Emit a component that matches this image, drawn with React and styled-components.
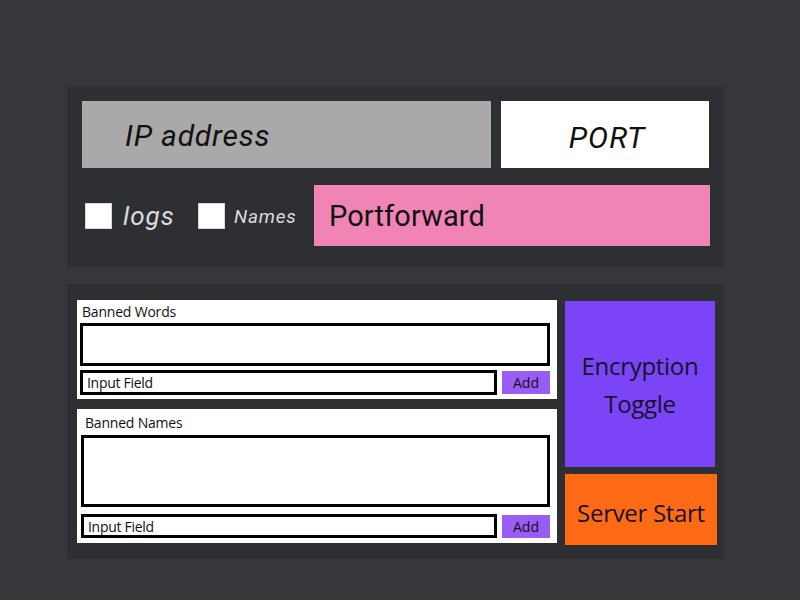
import React from "react";
import styled, { createGlobalStyle } from "styled-components";

const Global = createGlobalStyle`
  html, body { margin: 0; padding: 0; background: #36373b; }
  body { width: 800px; height: 600px; overflow: hidden; }
  * { box-sizing: border-box; }
`;

const Page = styled.div`
  width: 800px;
  height: 600px;
  padding: 86px 0 0 67px;
  display: flex;
  flex-direction: column;
  gap: 17px;
  background: #36373b;
`;

const Panel = styled.section`
  width: 657px;
  background: #2e2f33;
`;

const TopPanel = styled(Panel)`
  height: 181px;
  padding: 15px 15px 0 15px;
  display: flex;
  flex-direction: column;
  gap: 17px;
`;

const Row = styled.div`
  display: flex;
  align-items: center;
  height: ${(p) => p.$h}px;
`;

const Field = styled.div`
  height: 100%;
  display: flex;
  align-items: center;
  font-family: Roboto, "Liberation Sans", sans-serif;
  font-style: italic;
  font-size: 30px;
  letter-spacing: ${(p) => p.$ls}px;
  color: #111;
  background: ${(p) => p.$bg};
  width: ${(p) => (p.$w ? `${p.$w}px` : "auto")};
  flex: ${(p) => (p.$w ? "none" : "1")};
  justify-content: ${(p) => (p.$center ? "center" : "flex-start")};
  padding: ${(p) => (p.$center ? "6px 0 0 4px" : "2px 0 0 43px")};
`;

const Gap = styled.div`
  width: ${(p) => p.$w}px;
  flex: none;
`;

const Check = styled.div`
  width: 27px;
  height: 26px;
  background: #fff;
  border: 1px solid #d8d8d8;
  flex: none;
  margin-left: ${(p) => p.$ml}px;
`;

const CheckLabel = styled.span`
  font-family: Roboto, "Liberation Sans", sans-serif;
  font-style: italic;
  color: #dcdcdc;
  font-size: ${(p) => p.$size}px;
  letter-spacing: ${(p) => p.$ls}px;
  width: ${(p) => p.$w}px;
  flex: none;
  white-space: nowrap;
  margin-left: ${(p) => p.$ml}px;
  padding-top: ${(p) => p.$pt}px;
`;

const Portforward = styled.div`
  flex: 1;
  height: 61px;
  margin-right: -1px;
  background: #f084b4;
  display: flex;
  align-items: center;
  padding: 1px 0 0 15px;
  font-family: Roboto, "Liberation Sans", sans-serif;
  font-size: 29px;
  letter-spacing: 0.1px;
  color: #111;
`;

const BottomPanel = styled(Panel)`
  height: 275px;
  padding: 16px 7px 0 10px;
  display: grid;
  grid-template-columns: 480px 152px;
  column-gap: 8px;
  align-items: start;
`;

const LeftCol = styled.div`
  display: flex;
  flex-direction: column;
  gap: 10px;
`;

const Card = styled.div`
  background: #fff;
  padding: 0 7px ${(p) => p.$pb}px ${(p) => p.$pl}px;
  display: flex;
  flex-direction: column;
  font-family: "Open Sans", "Noto Sans", sans-serif;
  color: #111;
`;

const CardLabel = styled.div`
  height: ${(p) => p.$h}px;
  display: flex;
  align-items: center;
  padding-left: ${(p) => p.$pl}px;
  font-size: 14px;
  letter-spacing: -0.2px;
`;

const TextBox = styled.div`
  height: ${(p) => p.$h}px;
  border: 3px solid #000;
  background: #fff;
`;

const InputRow = styled.div`
  display: flex;
  align-items: center;
  gap: 5px;
  margin-top: ${(p) => p.$mt}px;
  height: ${(p) => p.$h}px;
`;

const Input = styled.div`
  flex: 1;
  height: 100%;
  border: 3px solid #000;
  display: flex;
  align-items: center;
  padding-left: 4px;
  font-size: 14px;
  letter-spacing: -0.3px;
`;

const AddButton = styled.div`
  width: 48px;
  height: 23px;
  background: #9a5cf6;
  display: flex;
  align-items: center;
  justify-content: center;
  font-size: 14px;
  color: #111;
`;

const RightCol = styled.div`
  display: flex;
  flex-direction: column;
  gap: 7px;
  padding-top: 1px;
`;

const BigButton = styled.div`
  height: ${(p) => p.$h}px;
  width: ${(p) => p.$w}px;
  background: ${(p) => p.$bg};
  display: flex;
  align-items: center;
  justify-content: center;
  text-align: center;
  font-family: "Open Sans", "Noto Sans", sans-serif;
  font-size: 24px;
  line-height: 38px;
  letter-spacing: -0.3px;
  color: #15122a;
  padding-top: ${(p) => p.$pt || 0}px;
`;

function ListCard({ title, labelH, labelPl, boxH, gapTop, rowH, pb, pl }) {
  return (
    <Card $pb={pb} $pl={pl}>
      <CardLabel $h={labelH} $pl={labelPl}>{title}</CardLabel>
      <TextBox $h={boxH} />
      <InputRow $mt={gapTop} $h={rowH}>
        <Input>Input Field</Input>
        <AddButton>Add</AddButton>
      </InputRow>
    </Card>
  );
}

export default function App() {
  return (
    <>
      <Global />
      <Page>
        <TopPanel>
          <Row $h={67}>
            <Field $bg="#a9a9a9" $w={409} $ls={0.8}>IP address</Field>
            <Gap $w={10} />
            <Field $bg="#ffffff" $center $ls={1}>PORT</Field>
          </Row>
          <Row $h={61}>
            <Check $ml={3} />
            <CheckLabel $size={26} $ls={1} $w={75} $ml={11} $pt={0}>logs</CheckLabel>
            <Check $ml={0} />
            <CheckLabel $size={19} $ls={0.8} $w={80} $ml={9} $pt={2}>Names</CheckLabel>
            <Portforward>Portforward</Portforward>
          </Row>
        </TopPanel>
        <BottomPanel>
          <LeftCol>
            <ListCard
              title="Banned Words"
              labelH={23}
              labelPl={2}
              boxH={43}
              gapTop={4}
              rowH={25}
              pb={4}
              pl={3}
            />
            <ListCard
              title="Banned Names"
              labelH={26}
              labelPl={4}
              boxH={72}
              gapTop={7}
              rowH={24}
              pb={5}
              pl={4}
            />
          </LeftCol>
          <RightCol>
            <BigButton $h={166} $w={150} $bg="#7b45f7" $pt={2}>
              Encryption
              <br />
              Toggle
            </BigButton>
            <BigButton $h={71} $w={152} $bg="#ff6b14" $pt={7}>
              Server Start
            </BigButton>
          </RightCol>
        </BottomPanel>
      </Page>
    </>
  );
}
